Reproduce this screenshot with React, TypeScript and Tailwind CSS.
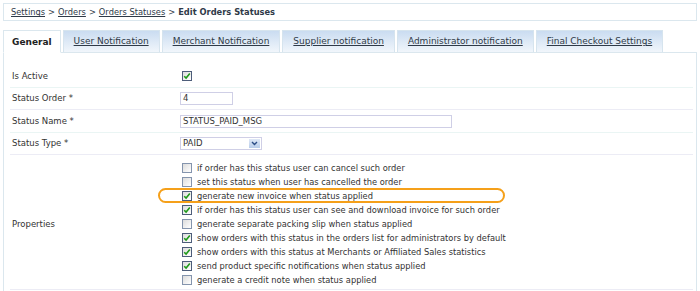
import React from "react";

const tabs = [
  "User Notification",
  "Merchant Notification",
  "Supplier notification",
  "Administrator notification",
  "Final Checkout Settings",
];

const properties = [
  { text: "if order has this status user can cancel such order", checked: false },
  { text: "set this status when user has cancelled the order", checked: false },
  { text: "generate new invoice when status applied", checked: true },
  { text: "if order has this status user can see and download invoice for such order", checked: true },
  { text: "generate separate packing slip when status applied", checked: false },
  { text: "show orders with this status in the orders list for administrators by default", checked: true },
  { text: "show orders with this status at Merchants or Affiliated Sales statistics", checked: true },
  { text: "send product specific notifications when status applied", checked: true },
  { text: "generate a credit note when status applied", checked: false },
];

const Box = ({ checked }: { checked: boolean }) => (
  <span
    className={
      "flex items-center justify-center w-[10px] h-[10px] border bg-gradient-to-br from-[#dcdcdc] to-[#ffffff] " +
      (checked ? "border-[#4d5d7a]" : "border-[#8494ad]")
    }
  >
    {checked && (
      <svg width="8" height="8" viewBox="0 0 8 8">
        <path d="M1.2 4.2 L3.1 6.1 L6.8 1.6" fill="none" stroke="#1f9a1a" strokeWidth="1.6" />
      </svg>
    )}
  </span>
);

const App = () => {
  return (
    <div className="relative w-[700px] h-[291px] overflow-hidden bg-white px-[3px] pt-[3px] font-['DejaVu_Sans',sans-serif] text-[#333]">
      {/* breadcrumb */}
      <div className="h-[18px] border border-[#dbe7ee] flex items-center pl-[7px] pt-px text-[8.3px] text-[#2f3a48]">
        <span className="underline">Settings</span>
        <span className="mx-[3px]">&gt;</span>
        <span className="underline">Orders</span>
        <span className="mx-[3px]">&gt;</span>
        <span className="underline">Orders Statuses</span>
        <span className="mx-[3px]">&gt;</span>
        <span className="font-bold">Edit Orders Statuses</span>
      </div>

      {/* tabs */}
      <div className="mt-[9px] flex items-end h-[23px] gap-[2px] border-b border-[#dbe7ee]">
        <div className="h-[23px] -mb-px px-[8px] pt-[2px] flex items-center bg-white border border-b-white border-[#dbe7ee] text-[9px] font-bold text-[#222]">
          General
        </div>
        {tabs.map((t) => (
          <div
            key={t}
            className="h-[22px] px-[10px] pt-px flex items-center border border-b-0 border-[#d6e4ee] bg-gradient-to-b from-[#cadcf1] to-[#f1f6fb] text-[9px] text-[#2f3a48] underline"
          >
            {t}
          </div>
        ))}
      </div>

      {/* panel */}
      <div className="h-[240px] border-x border-[#dbe7ee] pl-[6px] pr-[3px] pt-[12px] text-[8.5px]">
        <div className="grid grid-cols-[170px_1fr] h-[23px] border-b border-[#eaf5f4]">
          <div className="pl-[2px] flex items-center">Is Active</div>
          <div className="flex items-center pl-[2px]">
            <Box checked />
          </div>
        </div>
        <div className="grid grid-cols-[170px_1fr] h-[22px] border-b border-[#ececf5]">
          <div className="pl-[2px] flex items-center">Status Order *</div>
          <div className="flex items-center">
            <div className="w-[53px] h-[13px] border border-[#cfcfe6] flex items-center pl-[2px] text-[8.5px]">4</div>
          </div>
        </div>
        <div className="grid grid-cols-[170px_1fr] h-[23px] border-b border-[#eaf5f4]">
          <div className="pl-[2px] flex items-center">Status Name *</div>
          <div className="flex items-center">
            <div className="w-[272px] h-[13px] border border-[#cfcfe6] flex items-center pl-[2px] text-[8.5px]">
              STATUS_PAID_MSG
            </div>
          </div>
        </div>
        <div className="grid grid-cols-[170px_1fr] h-[22px] border-b border-[#ececf5]">
          <div className="pl-[2px] flex items-center">Status Type *</div>
          <div className="flex items-center">
            <div className="w-[82px] h-[13px] border border-[#cfcfe6] flex items-center justify-between pl-[2px] pr-[1px] text-[8.5px]">
              <span>PAID</span>
              <span className="w-[11px] h-[9px] bg-gradient-to-b from-[#dfe8f6] to-[#b9cdea] flex items-center justify-center">
                <svg width="7" height="5" viewBox="0 0 7 5">
                  <path d="M1 1 L3.5 3.5 L6 1" fill="none" stroke="#2c4d86" strokeWidth="1.4" />
                </svg>
              </span>
            </div>
          </div>
        </div>
        <div className="grid grid-cols-[170px_1fr] border-b border-[#ececf5] pt-[6px] pb-[2px]">
          <div className="pl-[2px] flex items-center">Properties</div>
          <div className="flex flex-col pl-[2px]">
            {properties.map((p) => (
              <div key={p.text} className="h-[14px] flex items-center gap-[5px] text-[8.3px]">
                <Box checked={p.checked} />
                <span>{p.text}</span>
              </div>
            ))}
          </div>
        </div>
      </div>

      {/* highlight annotation */}
      <div className="absolute left-[158px] top-[188px] w-[347px] h-[15px] rounded-full border-2 border-[#f5a01a]" />
    </div>
  );
};

export default App;
